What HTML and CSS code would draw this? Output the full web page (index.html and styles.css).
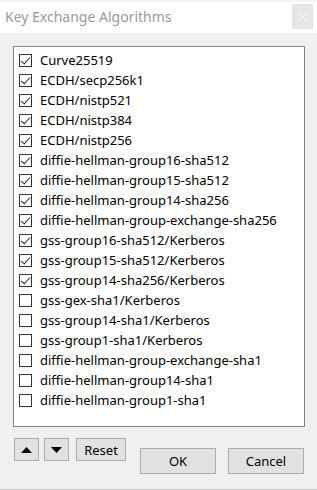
FILE: index.html
```
<!doctype html>
<html lang="en">
<head>
  <meta charset="utf-8">
  <title>Key Exchange Algorithms</title>
  <link rel="stylesheet" href="styles.css">
</head>
<body>
	<div class="window">
		<div class="titlebar">
			<span class="title">Key Exchange Algorithms</span>
			<button class="close">
				<svg width="10" height="10" viewBox="0 0 10 10"><path d="M0.5 0.5L9.5 9.5M9.5 0.5L0.5 9.5" stroke="#f4f4f4" stroke-width="1.2"/></svg>
			</button>
		</div>
		<div class="content">
			<div class="list">
				<label class="item"><span class="box on"></span>Curve25519</label>
				<label class="item"><span class="box on"></span>ECDH/secp256k1</label>
				<label class="item"><span class="box on"></span>ECDH/nistp521</label>
				<label class="item"><span class="box on"></span>ECDH/nistp384</label>
				<label class="item"><span class="box on"></span>ECDH/nistp256</label>
				<label class="item"><span class="box on"></span>diffie-hellman-group16-sha512</label>
				<label class="item"><span class="box on"></span>diffie-hellman-group15-sha512</label>
				<label class="item"><span class="box on"></span>diffie-hellman-group14-sha256</label>
				<label class="item"><span class="box on"></span>diffie-hellman-group-exchange-sha256</label>
				<label class="item"><span class="box on"></span>gss-group16-sha512/Kerberos</label>
				<label class="item"><span class="box on"></span>gss-group15-sha512/Kerberos</label>
				<label class="item"><span class="box on"></span>gss-group14-sha256/Kerberos</label>
				<label class="item"><span class="box"></span>gss-gex-sha1/Kerberos</label>
				<label class="item"><span class="box"></span>gss-group14-sha1/Kerberos</label>
				<label class="item"><span class="box"></span>gss-group1-sha1/Kerberos</label>
				<label class="item"><span class="box"></span>diffie-hellman-group-exchange-sha1</label>
				<label class="item"><span class="box"></span>diffie-hellman-group14-sha1</label>
				<label class="item"><span class="box"></span>diffie-hellman-group1-sha1</label>
			</div>
			<div class="footer">
				<button class="btn arrow"><svg width="11" height="6" viewBox="0 0 11 6"><path d="M0 6L5.5 0L11 6Z" fill="#000"/></svg></button>
				<button class="btn arrow"><svg width="11" height="6" viewBox="0 0 11 6"><path d="M0 0L5.5 6L11 0Z" fill="#000"/></svg></button>
				<button class="btn reset">Reset</button>
				<button class="btn big ok">OK</button>
				<button class="btn big cancel">Cancel</button>
			</div>
		</div>
	</div>
</body>
</html>
```
FILE: styles.css
```
html,body{
	margin:0; padding:0;
	background:#f0f0f0;
	font-family:"Noto Sans","Liberation Sans",sans-serif;
}
button{ font-family:inherit; cursor:pointer; }
button:focus{ outline:none; }
.window{
	width:317px;
	height:490px;
	box-sizing:border-box;
	background:#f0f0f0;
	border-bottom:1px solid #d0d0d0;
}
.titlebar{
	height:33px;
	background:#fff;
	display:flex;
	align-items:center;
	justify-content:space-between;
	border-top:2px solid #f3f3f3;
	box-sizing:border-box;
}
.title{
	color:#999;
	font-size:14px;
	margin-left:5px;
	margin-top:-2px;
}
.close{
	width:21px; height:25px;
	margin-right:4px; margin-top:-2px;
	border:none;
	background:#e6e6e6;
	padding:0;
	display:flex; align-items:center; justify-content:center;
}
.content{ padding:13px 12px 0 13px; }
.list{
	height:381px;
	box-sizing:border-box;
	background:#fff;
	border:1px solid #828282;
	padding-top:3px;
	display:flex;
	flex-direction:column;
}
.item{
	height:20px;
	display:flex;
	align-items:center;
	font-size:13px;
	color:#000;
	padding-left:5px;
}
.box{
	width:13px; height:13px;
	box-sizing:border-box;
	border:1px solid #333;
	background:#fff;
	margin-right:8px;
	flex:none;
	position:relative;
}
.box.on::after{
	content:"";
	position:absolute;
	left:3px; top:0px;
	width:4px; height:8px;
	border:solid #333;
	border-width:0 1px 1px 0;
	transform:rotate(42deg);
}
.footer{
	display:flex;
	align-items:flex-start;
	margin-top:11px;
	margin-left:1px;
}
.btn{
	background:#e1e1e1;
	border:1px solid #adadad;
	font-size:13px;
	color:#000;
	padding:0;
	box-sizing:border-box;
	display:flex; align-items:center; justify-content:center;
}
.arrow{ width:25px; height:23px; margin-right:5px; }
.reset{ width:50px; height:23px; margin-left:2px; }
.big{ width:76px; height:26px; margin-top:10px; }
.ok{ margin-left:14px; }
.cancel{ margin-left:12px; }
```
